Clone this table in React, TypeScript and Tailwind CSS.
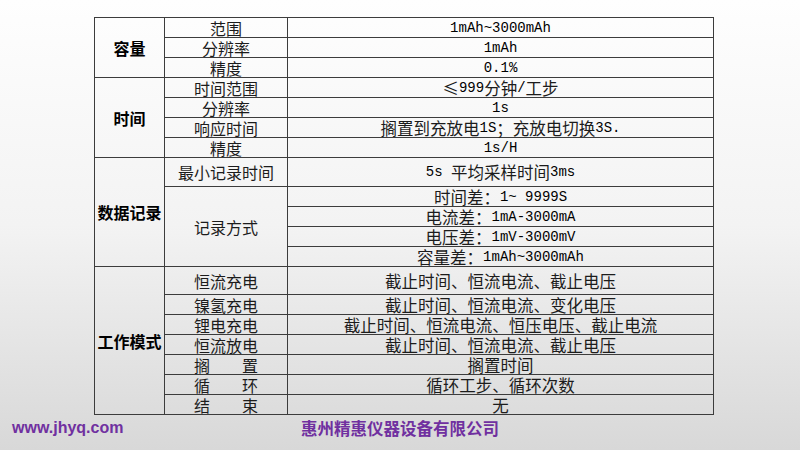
import React from 'react'

const cjk = '"Noto Sans CJK SC", "Noto Sans", sans-serif'

// split ascii runs so latin text gets the narrow mono look of the original
function Mixed({ text }: { text: string }) {
  const parts = text.split(/([\x20-\x7E]+)/).filter((p) => p !== '')
  return (
    <>
      {parts.map((p, i) =>
        /^[\x20-\x7E]+$/.test(p) ? (
          <span key={i} className="font-['Liberation_Mono',monospace] text-[14px] text-black whitespace-pre">
            {p}
          </span>
        ) : (
          <span key={i}>{p}</span>
        )
      )}
    </>
  )
}

const cell = 'flex items-center justify-center border-r border-b border-[#3c3c3c] leading-[16px] text-[#1c1c1c] whitespace-pre'

function Head({ label, span }: { label: string; span: string }) {
  return <div className={`${cell} ${span} col-start-1 text-[16px] font-bold text-black`}>{label}</div>
}

function Row({ name, value, nameSpan = '' }: { name?: string; value: string; nameSpan?: string }) {
  return (
    <>
      {name !== undefined && <div className={`${cell} ${nameSpan} col-start-2 text-[16px]`}>{name}</div>}
      <div className={`${cell} col-start-3 text-[16.5px]`}>
        <Mixed text={value} />
      </div>
    </>
  )
}

export default function App() {
  return (
    <div
      className="w-[800px] h-[450px] overflow-hidden bg-gradient-to-b from-[#fefefe] via-[#f3f3f3] to-[#d8d8d8] pt-[17px]"
      style={{ fontFamily: cjk }}
    >
      <div className="ml-[94px] w-[620px] grid grid-cols-[70px_123px_426px] grid-rows-[repeat(7,20px)_29px_repeat(4,20px)_28px_repeat(6,20px)] border-l border-t border-[#3c3c3c]">
        <Head label="容量" span="row-span-3" />
        <Row name="范围" value="1mAh~3000mAh" />
        <Row name="分辨率" value="1mAh" />
        <Row name="精度" value="0.1%" />

        <Head label="时间" span="row-span-4" />
        <Row name="时间范围" value="≤999分钟/工步" />
        <Row name="分辨率" value="1s" />
        <Row name="响应时间" value="搁置到充放电1S；充放电切换3S." />
        <Row name="精度" value="1s/H" />

        <Head label="数据记录" span="row-span-5" />
        <Row name="最小记录时间" value="5s 平均采样时间3ms" />
        <Row name="记录方式" nameSpan="row-span-4" value="时间差：1~ 9999S" />
        <Row value="电流差：1mA-3000mA" />
        <Row value="电压差：1mV-3000mV" />
        <Row value="容量差：1mAh~3000mAh" />

        <Head label="工作模式" span="row-span-7" />
        <Row name="恒流充电" value="截止时间、恒流电流、截止电压" />
        <Row name="镍氢充电" value="截止时间、恒流电流、变化电压" />
        <Row name="锂电充电" value="截止时间、恒流电流、恒压电压、截止电流" />
        <Row name="恒流放电" value="截止时间、恒流电流、截止电压" />
        <Row name="搁　　置" value="搁置时间" />
        <Row name="循　　环" value="循环工步、循环次数" />
        <Row name="结　　束" value="无" />
      </div>

      <div className="grid grid-cols-[1fr_auto_1fr] items-center mt-[4px] text-[#7030a0] font-bold">
        <div className="pl-[12px] text-[16px] leading-[18px] font-['Liberation_Sans',sans-serif]">www.jhyq.com</div>
        <div className="text-[16.5px] leading-[18px]">惠州精惠仪器设备有限公司</div>
        <div />
      </div>
    </div>
  )
}
